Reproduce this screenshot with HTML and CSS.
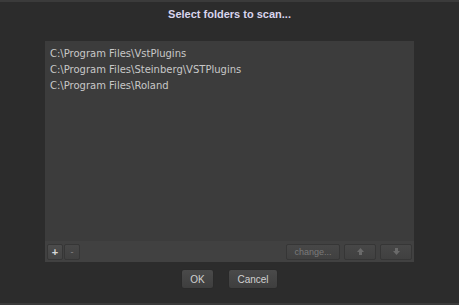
FILE: index.html
```html
<!DOCTYPE html>
<html>
<head>
<meta charset="utf-8">
<link rel="stylesheet" href="styles.css">
</head>
<body>
<div class="window">
  <div class="title">Select folders to scan...</div>
  <div class="panel">
    <div class="list">
      <div class="row">C:\Program Files\VstPlugins</div>
      <div class="row">C:\Program Files\Steinberg\VSTPlugins</div>
      <div class="row">C:\Program Files\Roland</div>
    </div>
    <div class="toolbar">
      <div class="tb-left">
        <button class="tbtn sq plus">+</button>
        <button class="tbtn sq minus">-</button>
      </div>
      <div class="tb-right">
        <button class="tbtn change">change...</button>
        <button class="tbtn arrow"><svg width="9" height="9" viewBox="0 0 9 9"><path d="M4.5 1 L8 5 L6 5 L6 8 L3 8 L3 5 L1 5 Z" fill="#6a6a6a"/></svg></button>
        <button class="tbtn arrow"><svg width="9" height="9" viewBox="0 0 9 9"><path d="M4.5 8 L8 4 L6 4 L6 1 L3 1 L3 4 L1 4 Z" fill="#6a6a6a"/></svg></button>
      </div>
    </div>
  </div>
  <div class="actions">
    <button class="btn ok">OK</button>
    <button class="btn cancel">Cancel</button>
  </div>
</div>
</body>
</html>
```

FILE: styles.css
```css
html, body {
  margin: 0;
  padding: 0;
  background: #2c2c2c;
}
.window {
  width: 459px;
  height: 305px;
  box-sizing: border-box;
  border-top: 2px solid #3b3b3b;
  border-bottom: 2px solid #3a3a3a;
  display: flex;
  flex-direction: column;
  font-family: "Liberation Sans", Arial, sans-serif;
}
.title {
  height: 26px;
  line-height: 25px;
  text-align: center;
  color: #d9d5ee;
  font-weight: bold;
  font-size: 11px;
}
.panel {
  margin: 13px 0 0 45px;
  width: 369px;
  height: 221px;
  background: #3c3c3c;
  display: flex;
  flex-direction: column;
}
.list {
  flex: 1;
  padding: 4px 0 0 5px;
}
.row {
  height: 16px;
  line-height: 17px;
  font-family: "DejaVu Sans", Verdana, sans-serif;
  font-size: 10px;
  color: #c8c8c8;
}
.toolbar {
  height: 21px;
  background: #414141;
  display: flex;
  justify-content: space-between;
  align-items: center;
  padding: 0 2px;
}
.tb-left, .tb-right {
  display: flex;
  gap: 1px;
}
.tb-right { gap: 4px; }
.tbtn {
  height: 16px;
  margin: 0;
  padding: 0;
  border: 1px solid #363636;
  border-radius: 2px;
  background: linear-gradient(#474747, #404040);
  color: #777;
  font-family: "Liberation Sans", Arial, sans-serif;
  font-size: 9px;
  display: flex;
  align-items: center;
  justify-content: center;
}
.sq { width: 16px; }
.plus { color: #d8d8d8; font-size: 11px; font-weight: bold; background: linear-gradient(#4c4c4c, #444); }
.minus { color: #888; }
.change { width: 54px; color: #7a7a7a; }
.arrow { width: 32px; }
.actions {
  display: flex;
  justify-content: center;
  gap: 14px;
  margin-top: 7px;
}
.btn {
  height: 20px;
  margin: 0;
  padding: 0;
  border: 1px solid #2a2a2a;
  border-radius: 3px;
  background: linear-gradient(#4a4a4a, #3e3e3e);
  color: #d0d0d0;
  font-family: "Liberation Sans", Arial, sans-serif;
  font-size: 10px;
}
.ok { width: 33px; }
.cancel { width: 50px; }
```
